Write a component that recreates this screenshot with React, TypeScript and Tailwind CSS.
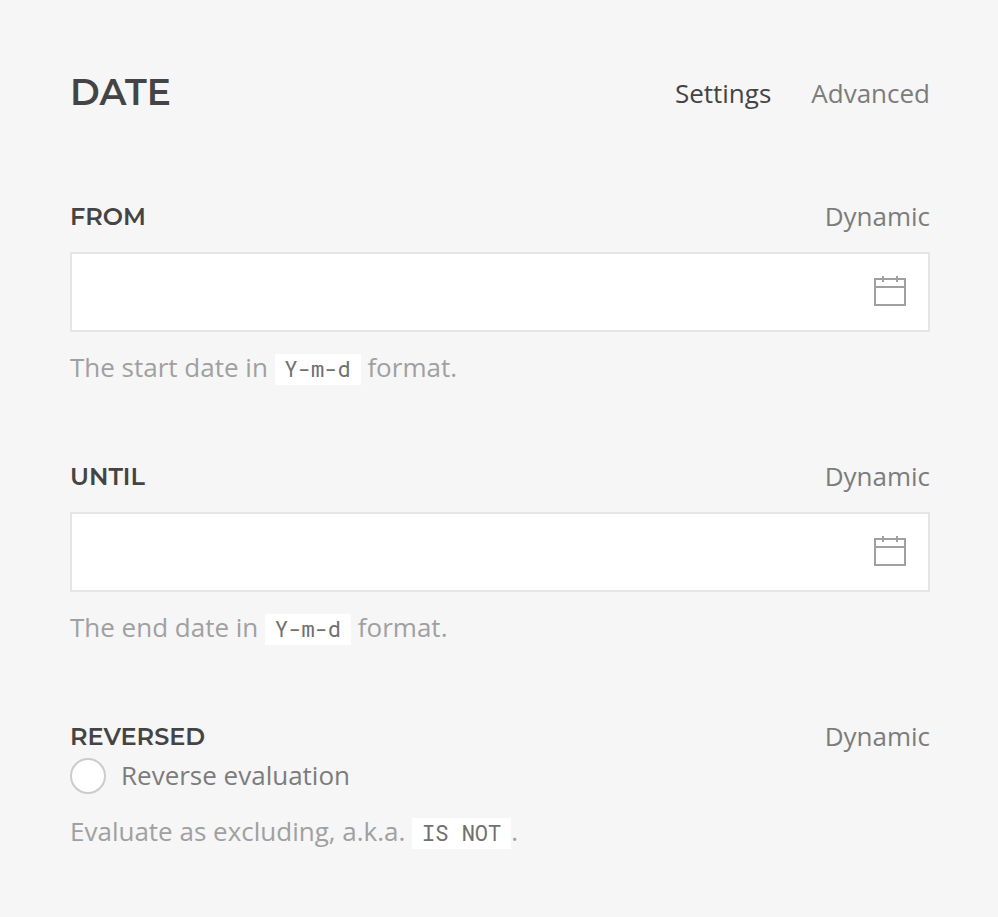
function Calendar() {
  return (
    <svg className="mr-[21px] block h-[40px] w-[34px]" viewBox="0 0 34 40" fill="none" stroke="#a0a0a0" strokeWidth="2">
      <rect x="2" y="7" width="30" height="26" />
      <path d="M2 15H32M10 4V10M24 4V10" />
    </svg>
  );
}

function Code({ children }: { children: string }) {
  return (
    <code className="mt-[4px] ml-[6.75px] block h-[31px] bg-white px-[10px] font-['Roboto_Mono','DejaVu_Sans_Mono',monospace] text-[22px] leading-[29px] whitespace-pre text-[#707070]">
      {children}
    </code>
  );
}

function Label({ children }: { children: string }) {
  return (
    <div className="flex h-[36px] items-center justify-between">
      <span className="mt-[2px] font-['Montserrat','Open_Sans',sans-serif] text-[24px] leading-[36px] font-semibold text-[#444]">{children}</span>
      <span className="text-[26px] leading-[36px] text-[#7c7c7c]">Dynamic</span>
    </div>
  );
}

function Field({ label, before }: { label: string; before: string }) {
  return (
    <section className="h-[260px]">
      <Label>{label}</Label>
      <div className="mt-[18px] flex h-[80px] items-center justify-end border-2 border-[#e5e5e5] bg-white">
        <Calendar />
      </div>
      <div className="mt-[17px] flex h-[36px] items-center text-[26px] leading-[36px] text-[#a0a0a0]">
        <span>{before}</span>
        <Code>Y-m-d</Code>
        <span className="ml-[6.75px]">format.</span>
      </div>
    </section>
  );
}

export default function App() {
  return (
    <main className="h-[917px] w-[998px] bg-[#f6f6f6] pt-[73px] pr-[68px] pl-[70px] font-['Open_Sans',sans-serif]">
      <header className="flex h-[40px] items-center justify-between">
        <h1 className="-mt-[2px] font-['Montserrat','Open_Sans',sans-serif] text-[36px] leading-[40px] font-semibold text-[#444]">DATE</h1>
        <nav className="flex gap-[40px] text-[26px] leading-[40px] text-[#7c7c7c]">
          <span className="text-[#444]">Settings</span>
          <span>Advanced</span>
        </nav>
      </header>
      <div className="mt-[85px]">
        <Field label="FROM" before="The start date in" />
        <Field label="UNTIL" before="The end date in" />
        <Label>REVERSED</Label>
        <div className="mt-[4px] flex h-[36px] items-center gap-[15px] text-[26px] text-[#7c7c7c]">
          <span className="h-[36px] w-[36px] rounded-full border-2 border-[#ccc] bg-white" />
          <span className="-mt-[2px] leading-[36px]">Reverse evaluation</span>
        </div>
        <div className="mt-[19px] flex h-[36px] items-center text-[26px] leading-[36px] text-[#a0a0a0]">
          <span>Evaluate as excluding, a.k.a.</span>
          <Code>IS NOT</Code>
          <span>.</span>
        </div>
      </div>
    </main>
  );
}
